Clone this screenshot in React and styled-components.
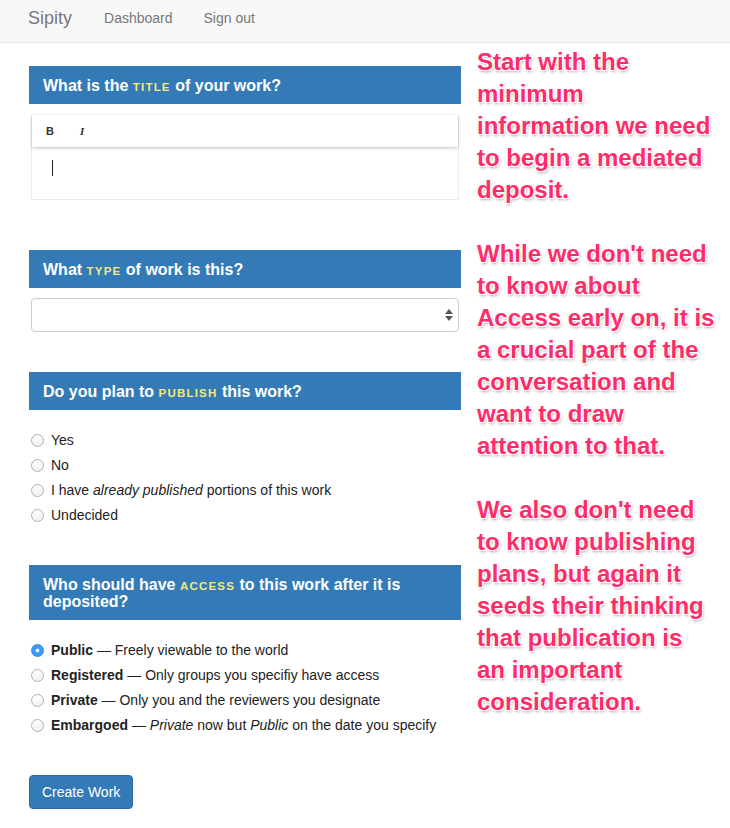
import React from 'react'
import styled, { createGlobalStyle } from 'styled-components'

const GlobalStyle = createGlobalStyle`
    body {
        margin: 0;
        background: #fff;
        font-family: "Liberation Sans", Arial, sans-serif;
        color: #333;
    }
`

const publishOptions = [
    { id: 'yes', label: <>Yes</> },
    { id: 'no', label: <>No</> },
    { id: 'already', label: <>I have <em>already published</em> portions of this work</> },
    { id: 'undecided', label: <>Undecided</> },
]

const accessOptions = [
    { id: 'public', name: 'Public', desc: <>Freely viewable to the world</>, checked: true },
    { id: 'registered', name: 'Registered', desc: <>Only groups you specifiy have access</> },
    { id: 'private', name: 'Private', desc: <>Only you and the reviewers you designate</> },
    { id: 'embargoed', name: 'Embargoed', desc: <><em>Private</em> now but <em>Public</em> on the date you specify</> },
]

const notes = [
    ['Start with the', 'minimum', 'information we need', 'to begin a mediated', 'deposit.'],
    ['While we don\'t need', 'to know about', 'Access early on, it is', 'a crucial part of the', 'conversation and', 'want to draw', 'attention to that.'],
    ['We also don\'t need', 'to know publishing', 'plans, but again it', 'seeds their thinking', 'that publication is', 'an important', 'consideration.'],
]

const Radio = ({ checked, children }) => (
    <RadioRow>
        <RadioDot checked={checked} />
        <span>{children}</span>
    </RadioRow>
)

const App = () => {
    return (
        <>
            <GlobalStyle />
            <Navbar>
                <Brand>Sipity</Brand>
                <NavLink>Dashboard</NavLink>
                <NavLink>Sign out</NavLink>
            </Navbar>
            <Page>
                <Main>
                    <Section>
                        <Heading>What is the <Keyword>title</Keyword> of your work?</Heading>
                        <Editor>
                            <Toolbar>
                                <ToolButton>B</ToolButton>
                                <ToolButton italic>I</ToolButton>
                            </Toolbar>
                            <EditorBody>
                                <Caret />
                            </EditorBody>
                        </Editor>
                    </Section>

                    <Section>
                        <Heading>What <Keyword>type</Keyword> of work is this?</Heading>
                        <SelectBox>
                            <svg width="8" height="12" viewBox="0 0 8 12">
                                <path d="M4 0 L8 5 L0 5 Z" fill="#555" />
                                <path d="M0 7 L8 7 L4 12 Z" fill="#555" />
                            </svg>
                        </SelectBox>
                    </Section>

                    <Section>
                        <Heading>Do you plan to <Keyword>publish</Keyword> this work?</Heading>
                        <RadioList>
                            {publishOptions.map(o => (
                                <Radio key={o.id}>{o.label}</Radio>
                            ))}
                        </RadioList>
                    </Section>

                    <Section>
                        <Heading>Who should have <Keyword>access</Keyword> to this work after it is deposited?</Heading>
                        <RadioList>
                            {accessOptions.map(o => (
                                <Radio key={o.id} checked={o.checked}>
                                    <strong>{o.name}</strong> — {o.desc}
                                </Radio>
                            ))}
                        </RadioList>
                    </Section>

                    <SubmitButton>Create Work</SubmitButton>
                </Main>

                <Notes>
                    {notes.map((para, i) => (
                        <Note key={i}>
                            {para.map((line, j) => <div key={j}>{line}</div>)}
                        </Note>
                    ))}
                </Notes>
            </Page>
        </>
    )
}

export default App


const Navbar = styled.nav`
    display: flex;
    align-items: flex-start;
    height: 43px;
    box-sizing: border-box;
    padding: 7px 0 0 28px;
    background: #f8f8f8;
    border-bottom: 1px solid #e7e7e7;
`
const Brand = styled.span`
    font-size: 18px;
    line-height: 22px;
    color: #777;
    margin-right: 32px;
`
const NavLink = styled.span`
    font-size: 14px;
    line-height: 22px;
    color: #777;
    margin-right: 31px;
`
const Page = styled.div`
    display: flex;
    align-items: flex-start;
`
const Main = styled.div`
    width: 432px;
    margin-left: 29px;
    padding-top: 23px;
    padding-bottom: 20px;
`
const Section = styled.section`
    padding-bottom: 40px;
`
const Heading = styled.h2`
    margin: 0;
    padding: 10.5px 14px;
    background: #337ab7;
    color: #fff;
    font-size: 16px;
    line-height: 17px;
    font-weight: bold;
`
const Keyword = styled.span`
    text-transform: uppercase;
    font-size: 11.5px;
    line-height: 1;
    letter-spacing: 1.2px;
    color: #f6e87c;
`
const Editor = styled.div`
    margin: 11px 2px 10px;
    border: 1px solid #ececec;
    border-top: none;
`
const Toolbar = styled.div`
    display: flex;
    align-items: center;
    height: 32px;
    padding-left: 14px;
    gap: 24px;
    background: #fff;
    box-shadow: 0 1px 3px rgba(0, 0, 0, 0.25);
    position: relative;
`
const ToolButton = styled.span`
    font-size: 11px;
    font-weight: bold;
    color: #333;
    width: 10px;
    font-style: ${p => (p.italic ? 'italic' : 'normal')};
    font-family: ${p => (p.italic ? '"Liberation Serif", serif' : '"Liberation Sans", sans-serif')};
`
const EditorBody = styled.div`
    height: 52px;
    padding: 13px 0 0 20px;
    box-sizing: border-box;
`
const Caret = styled.div`
    width: 1px;
    height: 16px;
    background: #222;
`
const SelectBox = styled.div`
    display: flex;
    align-items: center;
    justify-content: flex-end;
    height: 34px;
    box-sizing: border-box;
    margin: 10px 2px 0;
    padding-right: 5px;
    border: 1px solid #ccc;
    border-radius: 4px;
    background: #fff;
`
const RadioList = styled.div`
    display: flex;
    flex-direction: column;
    gap: 5px;
    padding: 20px 0 0 2px;
`
const RadioRow = styled.label`
    display: flex;
    align-items: center;
    gap: 7px;
    font-size: 14px;
    line-height: 20px;
    color: #222;
    strong {
        font-weight: bold;
    }
`
const RadioDot = styled.span`
    width: 13px;
    height: 13px;
    box-sizing: border-box;
    border-radius: 50%;
    flex: none;
    border: 1px solid ${p => (p.checked ? '#2f8cf5' : '#b0b0b0')};
    background: ${p => (p.checked ? 'radial-gradient(circle, #fff 0 1.6px, #3b99fc 2.2px)' : 'linear-gradient(#fff, #f0f0f0)')};
`
const SubmitButton = styled.button`
    font-family: "Liberation Sans", Arial, sans-serif;
    font-size: 14px;
    line-height: 20px;
    padding: 6px 12px;
    color: #fff;
    background: #337ab7;
    border: 1px solid #2e6da4;
    border-radius: 4px;
    margin-top: 0;
`
const Notes = styled.div`
    margin-left: 16px;
    padding-top: 3px;
    display: flex;
    flex-direction: column;
    gap: 32px;
`
const Note = styled.div`
    font-size: 24px;
    line-height: 32px;
    font-weight: bold;
    color: #fe2c6a;
    white-space: nowrap;
    text-shadow: -1px -1px 0 #fff, 1px -1px 0 #fff, -1px 1px 0 #fff, 1px 1px 0 #fff,
        1px 2px 3px rgba(0, 0, 0, 0.35);
`
